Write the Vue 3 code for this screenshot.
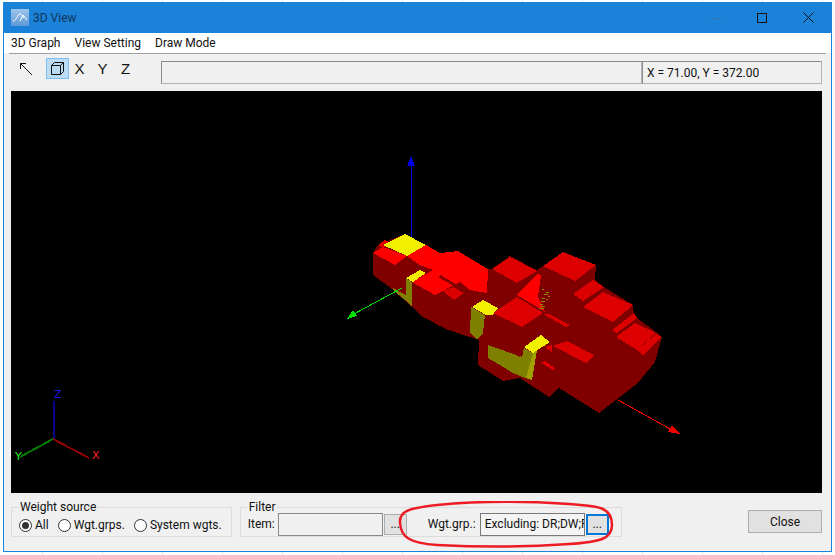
<template>
  <div class="desktop">
    <div class="window">
      <div class="titlebar">
        <svg class="app-icon" width="18" height="17" viewBox="0 0 18 17">
          <defs>
            <linearGradient id="ico" x1="0" y1="0" x2="0" y2="1">
              <stop offset="0" stop-color="#9cc4e8" />
              <stop offset="1" stop-color="#5f9ad6" />
            </linearGradient>
          </defs>
          <rect width="18" height="17" fill="url(#ico)" />
          <path d="M2 12 C6 12 6 5 9 5 C11 5 12 8 13 9 M9 12 L12 6 L16 11" fill="none" stroke="#fff" stroke-width="1" />
        </svg>
        <span class="title">3D View</span>
        <div class="win-btns">
          <span class="win-min"></span>
          <span class="win-max"></span>
          <svg class="win-close" width="11" height="11" viewBox="0 0 11 11">
            <path d="M0.5 0.5 L10.5 10.5 M10.5 0.5 L0.5 10.5" stroke="#111" stroke-width="1" />
          </svg>
        </div>
      </div>

      <div class="menubar">
        <span v-for="m in menus" :key="m" class="menu-item">{{ m }}</span>
      </div>

      <div class="toolbar">
        <div class="tool">
          <svg width="14" height="14" viewBox="0 0 14 14">
            <path d="M1.5 1.5 L13 13 M1.5 1.5 V7 M1.5 1.5 H7" fill="none" stroke="#111" stroke-width="1" />
          </svg>
        </div>
        <div class="tool active">
          <svg width="15" height="15" viewBox="0 0 15 15">
            <path d="M1.5 4.5 H10.5 V13.5 H1.5 Z M1.5 4.5 L4.5 1.5 H13.5 V10.5 L10.5 13.5 M10.5 4.5 L13.5 1.5" fill="none" stroke="#111" stroke-width="1" />
          </svg>
        </div>
        <span class="axis-btn">X</span>
        <span class="axis-btn">Y</span>
        <span class="axis-btn">Z</span>
        <div class="status wide"></div>
        <div class="status coords">X = 71.00, Y = 372.00</div>
      </div>

      <svg class="scene" viewBox="11 91 811 402" width="811" height="402" shape-rendering="crispEdges">
        <rect x="11" y="91" width="811" height="402" fill="#000" />

        <line x1="411" y1="165" x2="411" y2="248" stroke="#0000e0" />
        <polygon points="411,156 407,166 415,166" fill="#0000e0" />

        <polygon v-for="(p, i) in shapes" :key="i" :points="p[0]" :fill="p[1]" />
        <rect v-for="(d, i) in specks" :key="'s' + i" :x="d[0]" :y="d[1]" :width="d[2]" height="1" fill="#8c8c00" />

        <line x1="402" y1="288" x2="352" y2="315" stroke="#00e000" />
        <polygon points="347,319 353,310 357,316" fill="#00e000" />
        <line x1="618" y1="400" x2="672" y2="430" stroke="#f00000" />
        <polygon points="680,434 668,432 672,425" fill="#f00000" />

        <line x1="53.5" y1="401" x2="53.5" y2="439" stroke="#00008b" stroke-width="2" />
        <line x1="53" y1="439" x2="89" y2="458" stroke="#8b0000" stroke-width="2" />
        <line x1="53" y1="439" x2="20" y2="457" stroke="#007a00" stroke-width="2" />
        <text x="54" y="398" class="axis-label" fill="#1a1ae0">Z</text>
        <text x="92" y="459" class="axis-label" fill="#ff2020">X</text>
        <text x="15" y="460" class="axis-label" fill="#20f020">Y</text>
      </svg>

      <div class="bottom">
        <fieldset class="group source">
          <legend>Weight source</legend>
          <label class="radio"><span class="dot on"></span>All</label>
          <label class="radio"><span class="dot"></span>Wgt.grps.</label>
          <label class="radio"><span class="dot"></span>System wgts.</label>
        </fieldset>

        <fieldset class="group filter">
          <legend>Filter</legend>
          <span class="lbl">Item:</span>
          <div class="field disabled"></div>
          <button class="dots">...</button>
          <span class="lbl grp-lbl">Wgt.grp.:</span>
          <div class="field">Excluding: DR;DW;R</div>
          <button class="dots focus">...</button>
        </fieldset>

        <button class="close">Close</button>

        <svg class="mark" width="220" height="48" viewBox="0 0 220 48">
          <path d="M3 22 C2 10 12 7 40 4 C80 0 130 0 172 3 C202 5 215 6 215 24 C215 38 203 41 172 43 C130 46 80 46 40 44 C12 42 4 36 3 22 Z" fill="none" stroke="#ed1c24" stroke-width="2.5" />
        </svg>
      </div>
    </div>
  </div>
</template>

<script setup>
const menus = ['3D Graph', 'View Setting', 'Draw Mode']

const dark = '#800000'
const red = '#ff0000'
const mid = '#dc0000'
const yellow = '#f0f000'
const olive = '#808000'
const olive2 = '#a0a000'

// hull first, then the faces from back to front
const shapes = [
  ['373,253 378,245 405,234 440,253 458,251 488,269 492,269 510,256 537,270 543,266 563,252 596,265 595,280 604,287 633,305 633,310 637,318 656,332 662,337 655,362 638,383 599,413 559,388 549,397 520,378 503,381 478,365 479,340 470,337 448,330 423,317 412,307 392,289 373,275', dark],
  ['378,245 385,240 392,243 383,248', mid],
  ['373,253 383,247 407,256 395,265', red],
  ['407,256 426,245 440,253 420,265', red],
  ['383,245 405,234 426,245 407,256', yellow],
  ['420,265 440,253 458,251 488,269 487,293 470,290 460,282 435,295 412,282 433,270', red],
  ['440,275 470,292 468,294 438,277', dark],
  ['443,291 453,287 464,293 454,300', mid],
  ['436,297 443,293 456,301 450,304', dark],
  ['406,278 420,270 426,273 413,282', yellow],
  ['406,278 412,282 412,306 392,289 393,288 406,295', olive],
  ['492,269 510,257 537,271 517,283', mid],
  ['517,295 537,274 541,275 538,297 545,312', red],
  ['543,266 563,252 596,265 575,281', mid],
  ['543,314 549,314 570,325 566,327', mid],
  ['573,294 593,280 604,287 583,301', mid],
  ['583,307 603,292 633,305 613,322', mid],
  ['612,330 633,314 637,318 617,333', mid],
  ['616,337 635,323 656,333 637,350', mid],
  ['637,350 656,334 662,337 643,355', mid],
  ['553,346 567,341 594,355 586,363', mid],
  ['541,363 545,361 555,368 553,370', mid],
  ['545,347 552,345 552,352', mid],
  ['471,307 485,315 483,333 477,340 470,333', olive],
  ['472,307 483,300 498,308 493,315 486,315', yellow],
  ['488,345 522,357 524,348 533,353 532,380 525,378 513,373 488,358', olive],
  ['533,353 537,350 532,380 526,378', olive2],
  ['493,315 522,331 524,347 520,357 493,343', dark],
  ['493,313 517,297 543,313 522,327', mid],
  ['524,347 541,335 550,342 533,353', yellow]
]

const specks = [
  [542, 289, 2], [546, 292, 3], [544, 294, 4], [548, 296, 2], [542, 298, 3],
  [541, 301, 4], [546, 299, 2], [540, 304, 3], [541, 306, 4], [539, 308, 5]
]
</script>

<style>
body {
  margin: 0;
  background: #fff;
}
</style>

<style scoped>
.desktop {
  width: 835px;
  height: 555px;
  box-sizing: border-box;
  padding: 2px 3px 3px;
  overflow: hidden;
  font-family: Roboto, "Liberation Sans", sans-serif;
  font-size: 12px;
  color: #111;
  background-color: #fff;
  background-image: repeating-linear-gradient(90deg, #e4e4e4 0, #e4e4e4 1px, transparent 1px, transparent 60px);
  background-position: 42px 0;
}

.window {
  position: relative;
  box-sizing: border-box;
  width: 829px;
  height: 550px;
  background: #f0f0f0;
  border: 1px solid #1a82d8;
  border-top: 0;
  display: flex;
  flex-direction: column;
}

.titlebar {
  height: 31px;
  flex: none;
  margin: 0 -1px;
  background: #1a82d8;
  display: flex;
  align-items: center;
  padding-left: 8px;
}

.title {
  margin-left: 4px;
  font-size: 12px;
  color: #12365c;
}

.win-btns {
  margin-left: auto;
  display: flex;
  align-items: center;
  margin-right: 18px;
}

.win-min {
  width: 10px;
  height: 1px;
  background: #3a72b0;
  margin-top: 1px;
}

.win-max {
  width: 8px;
  height: 8px;
  border: 1px solid #111;
  margin-left: 36px;
}

.win-close {
  margin-left: 36px;
}

.menubar {
  height: 20px;
  flex: none;
  background: #fff;
  display: flex;
  align-items: center;
  gap: 14px;
  padding-left: 7px;
}

.toolbar {
  height: 38px;
  flex: none;
  margin: 0 5px;
  border-top: 1px solid #a0a0a0;
  display: flex;
  align-items: flex-start;
  padding: 4px 0 0 1px;
  box-sizing: border-box;
}

.tool {
  width: 23px;
  height: 21px;
  box-sizing: border-box;
  display: flex;
  align-items: center;
  justify-content: center;
  border: 1px solid transparent;
  margin-left: 4px;
}

.tool.active {
  background: #bcdcf4;
  border-color: #7ac0f4;
  margin-left: 9px;
  margin-right: -1px;
}

.axis-btn {
  width: 23px;
  line-height: 21px;
  text-align: center;
  font-family: "Liberation Sans", sans-serif;
  font-size: 15px;
}

.status {
  height: 23px;
  box-sizing: border-box;
  border: 1px solid #8a8a8a;
  border-right-color: #b4b4b4;
  border-bottom-color: #b4b4b4;
  display: flex;
  align-items: center;
  padding-left: 4px;
  margin-top: 3px;
}

.status.wide {
  width: 481px;
  margin-left: 24px;
}

.status.coords {
  width: 180px;
}

.scene {
  display: block;
  flex: none;
  margin-left: 7px;
}

.axis-label {
  font-family: "DejaVu Sans", sans-serif;
  font-size: 11px;
}

.bottom {
  flex: 1;
  display: flex;
  align-items: flex-start;
  padding: 9px 9px 0 7px;
}

fieldset.group {
  margin: 0;
  height: 35px;
  box-sizing: border-box;
  padding: 0 0 0 7px;
  border: 1px solid #dcdcdc;
  display: flex;
  align-items: center;
  position: relative;
}

fieldset.group legend {
  padding: 0 1px;
  margin-left: 0;
  line-height: 10px;
  height: 10px;
}

.source {
  width: 202px;
}

.filter {
  width: 382px;
  margin-left: 8px !important;
}

.radio {
  display: flex;
  align-items: center;
  margin-right: 9px;
  white-space: nowrap;
  padding-top: 2px;
}

.dot {
  width: 13px;
  height: 13px;
  box-sizing: border-box;
  border: 1px solid #333;
  border-radius: 50%;
  background: #fff;
  margin-right: 3px;
  display: flex;
  align-items: center;
  justify-content: center;
}

.dot.on::after {
  content: "";
  width: 7px;
  height: 7px;
  border-radius: 50%;
  background: #333;
}

.lbl {
  width: 30px;
  flex: none;
}

.grp-lbl {
  width: 52px;
  margin-left: 21px;
}

.field {
  width: 105px;
  height: 23px;
  flex: none;
  box-sizing: border-box;
  border: 1px solid #7a7a7a;
  background: #f4f4f4;
  padding-left: 4px;
  line-height: 20px;
  overflow: hidden;
  white-space: nowrap;
}

.field.disabled {
  background: #f0f0f0;
  border-color: #8a8a8a;
}

.dots {
  width: 23px;
  height: 21px;
  flex: none;
  margin-left: 1px;
  padding: 0;
  box-sizing: border-box;
  border: 1px solid #adadad;
  background: #e1e1e1;
  font-family: inherit;
  font-size: 12px;
  color: #111;
}

.dots.focus {
  border: 2px solid #0078d7;
}

.close {
  width: 74px;
  height: 23px;
  margin-left: auto;
  margin-top: 8px;
  padding: 0;
  box-sizing: border-box;
  border: 1px solid #adadad;
  background: #e1e1e1;
  font-family: inherit;
  font-size: 12px;
  color: #111;
}

.mark {
  position: absolute;
  left: 393px;
  top: 499px;
}
</style>
